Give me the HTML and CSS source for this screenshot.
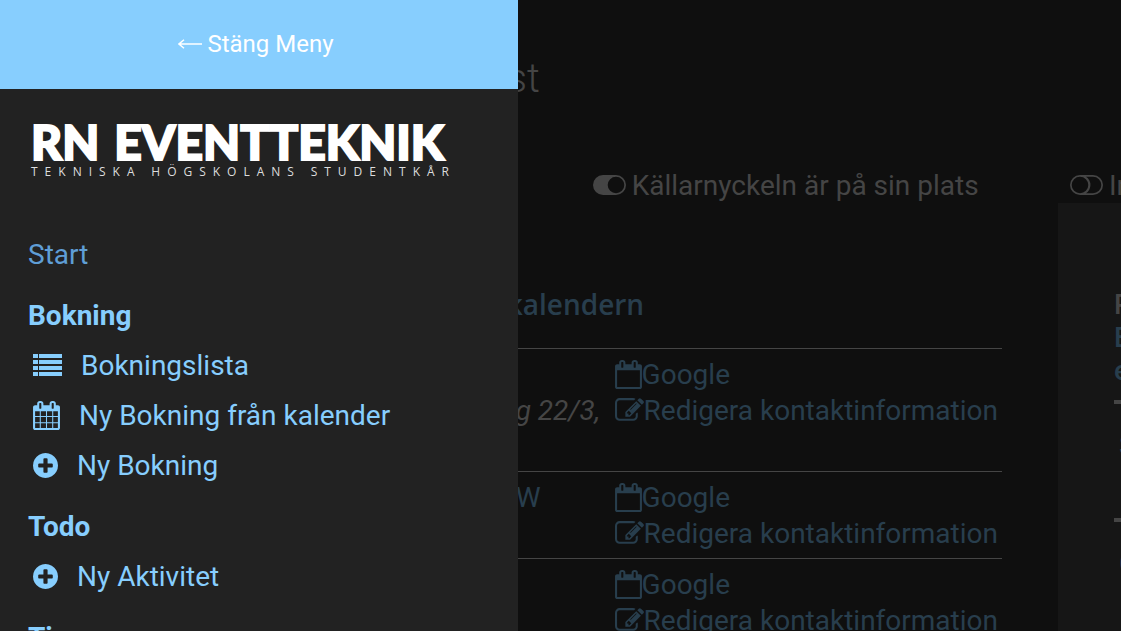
FILE: index.html
```html
<!DOCTYPE html>
<html lang="sv">
<head>
<meta charset="utf-8">
<meta name="viewport" content="width=device-width, initial-scale=1">
<title>RN Eventteknik</title>
<link rel="stylesheet" href="styles.css">
</head>
<body>
<svg class="defs" aria-hidden="true">
  <symbol id="list" viewBox="0 0 29 22"><path d="M0 0h5v4H0zM6 0h23v4H6zM0 6h5v4H0zM6 6h23v4H6zM0 12h5v4H0zM6 12h23v4H6zM0 18h5v4H0zM6 18h23v4H6z"/></symbol>
  <symbol id="calendar" viewBox="64 0 1664 1792"><path d="M192 1664h288v-288h-288v288zm352 0h320v-288h-320v288zm-352-352h288v-320h-288v320zm352 0h320v-320h-320v320zm-352-384h288v-288h-288v288zm736 736h320v-288h-320v288zm-384-736h320v-288h-320v288zm768 736h288v-288h-288v288zm-384-352h320v-320h-320v320zm-352-864v-288q0-13-9.500-22.500t-22.500-9.500h-64q-13 0-22.500 9.500t-9.500 22.500v288q0 13 9.500 22.500t22.500 9.500h64q13 0 22.500-9.500t9.500-22.500zm736 864h288v-320h-288v320zm-384-384h320v-288h-320v288zm384 0h288v-288h-288v288zm32-480v-288q0-13-9.500-22.500t-22.500-9.500h-64q-13 0-22.500 9.500t-9.500 22.500v288q0 13 9.500 22.500t22.500 9.500h64q13 0 22.500-9.500t9.500-22.500zm384-64v1280q0 52-38 90t-90 38h-1408q-52 0-90-38t-38-90v-1280q0-52 38-90t90-38h128v-96q0-66 47-113t113-47h64q66 0 113 47t47 113v96h384v-96q0-66 47-113t113-47h64q66 0 113 47t47 113v96h128q52 0 90 38t38 90z"/></symbol>
  <symbol id="calendar-o" viewBox="64 0 1664 1792"><path d="M192 1664h1408v-1024h-1408v1024zm384-1216v-288q0-13-9.500-22.500t-22.500-9.500h-64q-13 0-22.500 9.500t-9.500 22.500v288q0 13 9.500 22.500t22.500 9.500h64q13 0 22.500-9.500t9.500-22.500zm768 0v-288q0-13-9.500-22.500t-22.500-9.500h-64q-13 0-22.500 9.500t-9.500 22.500v288q0 13 9.500 22.500t22.500 9.500h64q13 0 22.500-9.500t9.500-22.500zm384-64v1280q0 52-38 90t-90 38h-1408q-52 0-90-38t-38-90v-1280q0-52 38-90t90-38h128v-96q0-66 47-113t113-47h64q66 0 113 47t47 113v96h384v-96q0-66 47-113t113-47h64q66 0 113 47t47 113v96h128q52 0 90 38t38 90z"/></symbol>
  <symbol id="plus" viewBox="128 128 1536 1536"><path d="M1344 960v-128q0-26-19-45t-45-19h-256v-256q0-26-19-45t-45-19h-128q-26 0-45 19t-19 45v256h-256q-26 0-45 19t-19 45v128q0 26 19 45t45 19h256v256q0 26 19 45t45 19h128q26 0 45-19t19-45v-256h256q26 0 45-19t19-45zm320-64q0 209-103 385.500t-279.500 279.500-385.500 103-385.500-103-279.500-279.500-103-385.500 103-385.500 279.500-279.500 385.500-103 385.500 103 279.500 279.500 103 385.500z"/></symbol>
  <symbol id="edit" viewBox="0 128 1792 1536"><path d="M888 1184l116-116-152-152-116 116v56h96v96h56zm440-720q-16-16-33 1l-350 350q-17 17-1 33t33-1l350-350q17-17 1-33zm80 594v190q0 119-84.500 203.500t-203.500 84.500h-832q-119 0-203.500-84.500t-84.500-203.500v-832q0-119 84.500-203.500t203.500-84.500h832q63 0 117 25 15 7 18 23 3 17-9 29l-49 49q-14 14-32 8-23-6-45-6h-832q-66 0-113 47t-47 113v832q0 66 47 113t113 47h832q66 0 113-47t47-113v-126q0-13 9-22l64-64q15-15 35-7t20 29zm-96-738l288 288-672 672h-288v-288zm444 132l-92 92-288-288 92-92q28-28 68-28t68 28l152 152q28 28 28 68t-28 68z"/></symbol>
  <symbol id="toggle-on" viewBox="0 0 33 20"><path fill-rule="evenodd" d="M10 0h13a10 10 0 0 1 0 20H10a10 10 0 0 1 0-20zM23 1.700a8.300 8.300 0 1 0 0 16.600a8.300 8.300 0 1 0 0-16.600z"/></symbol>
  <symbol id="toggle-off" viewBox="0 0 33 20"><path fill-rule="evenodd" d="M10 0h13a10 10 0 0 1 0 20H10a10 10 0 0 1 0-20zM10 1.700a8.300 8.300 0 1 0 0 16.600a8.300 8.300 0 1 0 0-16.600zM16 1.700a10 10 0 0 1 0 16.600h7a8.300 8.300 0 0 0 0-16.600z"/></symbol>
  <symbol id="arrow" viewBox="0 0 24 10"><path d="M1 5H24M6 .8L1 5l5 4.200" fill="none" stroke="currentColor" stroke-width="1.500"/></symbol>
</svg>

<aside class="drawer">
  <button class="close" type="button"><svg class="i-arrow" aria-hidden="true"><use href="#arrow"/></svg>Stäng Meny</button>
  <div class="logo">
    <div class="logo-name"><span>RN</span> <span>EVENTTEKNIK</span></div>
    <div class="logo-sub"><span>TEKNISKA</span><span>HÖGSKOLANS</span><span>STUDENTKÅR</span></div>
  </div>
  <nav class="menu">
    <a class="item active" href="#start">Start</a>
    <h2 class="group">Bokning</h2>
    <a class="item sub" href="#lista"><svg class="icon i-list" aria-hidden="true"><use href="#list"/></svg>Bokningslista</a>
    <a class="item sub" href="#kalender"><svg class="icon i-cal" aria-hidden="true"><use href="#calendar"/></svg>Ny Bokning från kalender</a>
    <a class="item sub" href="#ny"><svg class="icon i-plus" aria-hidden="true"><use href="#plus"/></svg>Ny Bokning</a>
    <h2 class="group">Todo</h2>
    <a class="item sub" href="#aktivitet"><svg class="icon i-plus" aria-hidden="true"><use href="#plus"/></svg>Ny Aktivitet</a>
    <h2 class="group">Ti</h2>
  </nav>
</aside>

<div class="page">
  <h1 class="title">st</h1>
  <div class="status status-key"><svg class="icon i-toggle" aria-hidden="true"><use href="#toggle-on"/></svg>Källarnyckeln är på sin plats</div>
  <div class="status status-in"><svg class="icon i-toggle" aria-hidden="true"><use href="#toggle-off"/></svg>In</div>
  <main class="content">
    <h2 class="heading"><a href="#kalendern">kalendern</a></h2>
    <table class="events">
      <tr>
        <td class="what"><br><em>g 22/3,</em><br>&nbsp;</td>
        <td><a class="link" href="#g1"><svg class="icon i-cal" aria-hidden="true"><use href="#calendar-o"/></svg>Google</a><a class="link" href="#r1"><svg class="icon i-edit" aria-hidden="true"><use href="#edit"/></svg>Redigera kontaktinformation</a></td>
      </tr>
      <tr>
        <td class="what"><a href="#w">W</a></td>
        <td><a class="link" href="#g2"><svg class="icon i-cal" aria-hidden="true"><use href="#calendar-o"/></svg>Google</a><a class="link" href="#r2"><svg class="icon i-edit" aria-hidden="true"><use href="#edit"/></svg>Redigera kontaktinformation</a></td>
      </tr>
      <tr>
        <td class="what"></td>
        <td><a class="link" href="#g3"><svg class="icon i-cal" aria-hidden="true"><use href="#calendar-o"/></svg>Google</a><a class="link" href="#r3"><svg class="icon i-edit" aria-hidden="true"><use href="#edit"/></svg>Redigera kontaktinformation</a></td>
      </tr>
    </table>
  </main>
  <aside class="side">
    <p class="side-text">P<br><a href="#e">E<br>e</a></p>
    <div class="side-item"><a href="#s">S</a></div>
    <div class="side-item"><a href="#c">C</a></div>
  </aside>
</div>
</body>
</html>
```
FILE: styles.css
```css
* { box-sizing: border-box; }
body {
  margin: 0;
  background: #0f0f0f;
  color: #454545;
  font: 28px/36px Roboto, sans-serif;
}
a { color: #283e4d; text-decoration: none; }
h1, h2, p { margin: 0; }
svg { flex: none; fill: currentColor; }
.defs { display: none; }
.icon { margin-bottom: 2px; }
.i-arrow { width: 24px; height: 10px; }
.i-list { width: 29px; height: 22px; }
.i-cal { width: 27px; height: 29px; }
.i-plus { width: 25px; height: 25px; }
.i-edit { width: 29px; height: 25px; }
.i-toggle { width: 33px; height: 20px; }

/* Slide-in menu */
.drawer {
  position: fixed;
  z-index: 1;
  top: 0;
  bottom: 0;
  left: 0;
  width: 46.2%;
  overflow: hidden;
  background: #222;
}
.close {
  display: flex;
  align-items: center;
  justify-content: center;
  gap: 5px;
  width: 100%;
  height: 89px;
  padding: 0 6px 2px 0;
  border: 0;
  background: #87cefe;
  color: #fff;
  font: 24px/36px Roboto, sans-serif;
}
.logo { width: 418px; margin: 30px 0 0 31px; color: #fff; }
.logo-name {
  display: flex;
  gap: 15px;
  font: 900 48px/46px Lato, sans-serif;
  -webkit-text-stroke: 2px #fff;
  white-space: nowrap;
}
.logo-sub {
  display: flex;
  justify-content: space-between;
  color: #ddd;
  font: 12px/14px "Open Sans", sans-serif;
  letter-spacing: 7px;
}
.logo-sub span:last-child { margin-right: -7px; }
.menu { padding: 51px 28px 0; }
.item {
  display: flex;
  align-items: center;
  gap: 19px;
  height: 50px;
  color: #87cefe;
}
.active { color: #5f9ed6; }
.sub { padding-left: 5px; }
.group {
  margin-top: 11px;
  color: #87cefe;
  font-size: 28px;
  font-weight: 700;
  line-height: 50px;
}

/* Dimmed page behind the menu */
.page {
  display: grid;
  grid-template-columns: minmax(0, 1fr) 63px;
  grid-template-rows: 167px 36px minmax(0, 1fr);
  height: 100vh;
  padding-left: 45.2%;
  overflow: hidden;
}
.title {
  grid-column: 1 / 3;
  padding-top: 54px;
  font-size: 40px;
  font-weight: 300;
  line-height: 50px;
}
.status {
  display: flex;
  align-items: center;
  gap: 6px;
  padding-top: 2px;
  overflow: hidden;
  white-space: nowrap;
}
.status-key { padding-left: 86px; }
.status-in { padding-left: 12px; }
.content { padding: 83px 56px 0 0; }
.heading { font: 600 28px/36px "Open Sans", sans-serif; }
.events {
  width: 100%;
  margin-top: 26px;
  border-collapse: collapse;
  white-space: nowrap;
}
.events td {
  padding: 8px 4px 6px 0;
  border-top: 1px solid #454545;
  vertical-align: top;
}
.events .what { width: 100%; padding-right: 0; padding-left: 9px; }
.link { display: flex; align-items: center; }
.side { overflow: hidden; background: #161616; padding: 85px 0 0 56px; line-height: 33px; }
.side-text { padding-bottom: 13px; font-weight: 500; }
.side-item {
  height: 118px;
  padding: 25px 0 0 5px;
  border-top: 4px solid #454545;
}
```
